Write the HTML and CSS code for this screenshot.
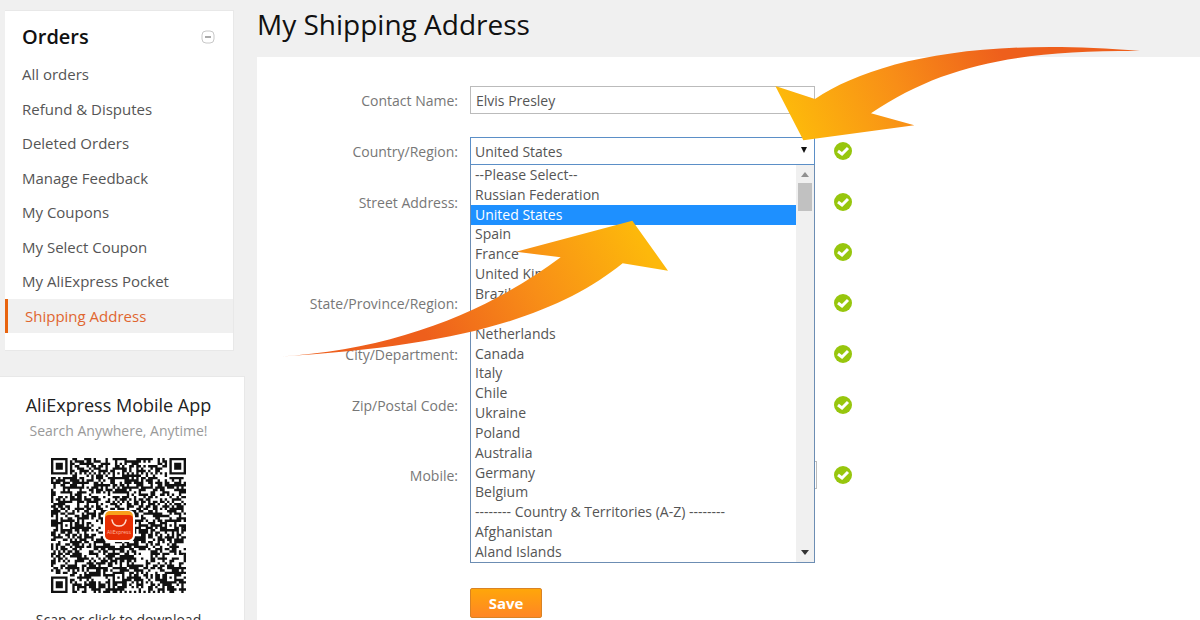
FILE: index.html
```html
<!DOCTYPE html>
<html lang="en">
<head>
    <meta charset="UTF-8">
    <meta name="viewport" content="width=device-width, initial-scale=1.0">
    <title>My Shipping Address</title>
    <link rel="stylesheet" href="styles.css">
</head>
<body>
    <div class="page">
        <aside class="sidebar">
            <nav class="orders">
                <div class="orders-head">
                    <h2>Orders</h2>
                    <button type="button" class="fold" aria-label="Collapse">
                        <svg width="14" height="14" viewBox="0 0 14 14">
                            <rect x="1" y="1" width="12" height="12" rx="4" fill="none" stroke="#c8c8c8"/>
                            <path d="M4 7h6" stroke="#aaa" stroke-width="2"/>
                        </svg>
                    </button>
                </div>
                <ul>
                    <li><a href="#">All orders</a></li>
                    <li><a href="#">Refund &amp; Disputes</a></li>
                    <li><a href="#">Deleted Orders</a></li>
                    <li><a href="#">Manage Feedback</a></li>
                    <li><a href="#">My Coupons</a></li>
                    <li><a href="#">My Select Coupon</a></li>
                    <li><a href="#">My AliExpress Pocket</a></li>
                    <li class="active"><a href="#">Shipping Address</a></li>
                </ul>
            </nav>
            <section class="app">
                <h3>AliExpress Mobile App</h3>
                <p class="slogan">Search Anywhere, Anytime!</p>
                <div class="qr">
                    <svg class="qr-code" viewBox="0 0 57 57">
                        <path id="qr-path" fill="#111"/>
                    </svg>
                    <svg class="qr-logo" viewBox="0 0 32 32">
                        <rect width="32" height="32" rx="6" fill="#fff"/>
                        <rect x="2" y="1" width="28" height="29" rx="5" fill="#f9a01b"/>
                        <path d="M2 9q0-4 4-4h20q4 0 4 4v16a5 5 0 0 1-5 5H7a5 5 0 0 1-5-5z" fill="#e62e04"/>
                        <path d="M9 10c1 8 13 8 14 0" fill="none" stroke="#ffd9c8" stroke-width="1.6" stroke-linecap="round"/>
                        <text x="16" y="24" text-anchor="middle" class="logo-text">AliExpress</text>
                    </svg>
                </div>
                <a class="download" href="#">Scan or click to download</a>
            </section>
        </aside>
        <main class="main">
            <h1>My Shipping Address</h1>
            <form class="panel">
                <div class="row">
                    <label for="name">Contact Name:</label>
                    <input type="text" id="name" value="Elvis Presley">
                </div>
                <div class="row">
                    <label for="country">Country/Region:</label>
                    <div class="select">
                        <select id="country">
                            <option>United States</option>
                        </select>
                        <svg class="caret" width="8" height="7" viewBox="0 0 8 7"><path d="M1 0h6L4 6z" fill="#111"/></svg>
                        <div class="dropdown">
                            <ul role="listbox" aria-label="Country/Region">
                                <li role="option">--Please Select--</li>
                                <li role="option">Russian Federation</li>
                                <li role="option" class="selected" aria-selected="true">United States</li>
                                <li role="option">Spain</li>
                                <li role="option">France</li>
                                <li role="option">United Kingdom</li>
                                <li role="option">Brazil</li>
                                <li role="option">Israel</li>
                                <li role="option">Netherlands</li>
                                <li role="option">Canada</li>
                                <li role="option">Italy</li>
                                <li role="option">Chile</li>
                                <li role="option">Ukraine</li>
                                <li role="option">Poland</li>
                                <li role="option">Australia</li>
                                <li role="option">Germany</li>
                                <li role="option">Belgium</li>
                                <li role="option">-------- Country &amp; Territories (A-Z) --------</li>
                                <li role="option">Afghanistan</li>
                                <li role="option">Aland Islands</li>
                            </ul>
                            <div class="scrollbar">
                                <svg width="8" height="5" viewBox="0 0 8 5"><path d="M4 0l4 5H0z" fill="#909090"/></svg>
                                <div class="thumb"></div>
                                <svg width="8" height="5" viewBox="0 0 8 5"><path d="M0 0h8L4 5z" fill="#333"/></svg>
                            </div>
                        </div>
                    </div>
                    <svg class="ok" viewBox="0 0 18 18"><circle cx="9" cy="9" r="9"/><path d="M4 9l4 3 6-6"/></svg>
                </div>
                <div class="row">
                    <label for="street">Street Address:</label>
                    <input type="text" id="street">
                    <svg class="ok" viewBox="0 0 18 18"><circle cx="9" cy="9" r="9"/><path d="M4 9l4 3 6-6"/></svg>
                </div>
                <div class="row second-line">
                    <label for="street2"></label>
                    <input type="text" id="street2">
                    <svg class="ok" viewBox="0 0 18 18"><circle cx="9" cy="9" r="9"/><path d="M4 9l4 3 6-6"/></svg>
                </div>
                <div class="row">
                    <label for="state">State/Province/Region:</label>
                    <input type="text" id="state">
                    <svg class="ok" viewBox="0 0 18 18"><circle cx="9" cy="9" r="9"/><path d="M4 9l4 3 6-6"/></svg>
                </div>
                <div class="row">
                    <label for="city">City/Department:</label>
                    <input type="text" id="city">
                    <svg class="ok" viewBox="0 0 18 18"><circle cx="9" cy="9" r="9"/><path d="M4 9l4 3 6-6"/></svg>
                </div>
                <div class="row">
                    <label for="zip">Zip/Postal Code:</label>
                    <input type="text" id="zip">
                    <svg class="ok" viewBox="0 0 18 18"><circle cx="9" cy="9" r="9"/><path d="M4 9l4 3 6-6"/></svg>
                </div>
                <div class="row mobile">
                    <label for="mobile">Mobile:</label>
                    <input type="text" id="mobile">
                    <svg class="ok" viewBox="0 0 18 18"><circle cx="9" cy="9" r="9"/><path d="M4 9l4 3 6-6"/></svg>
                </div>
                <button type="submit" class="save">Save</button>
            </form>
        </main>
        <svg class="arrow arrow-top" viewBox="0 0 1200 360">
            <defs>
                <linearGradient id="g1" gradientUnits="userSpaceOnUse" x1="120" y1="320" x2="720" y2="60">
                    <stop offset="0" stop-color="#fdb80b"/>
                    <stop offset="0.5" stop-color="#f88e17"/>
                    <stop offset="1" stop-color="#ee5f1c"/>
                </linearGradient>
            </defs>
            <path fill="url(#g1)" d="M46 168L165 207C330 97 640 20 1140 63C800 62 560 95 333 250L463 286L130 331Z"/>
        </svg>
        <svg class="arrow arrow-list" viewBox="0 0 1260 510">
            <defs>
                <linearGradient id="g2" gradientUnits="userSpaceOnUse" x1="1090" y1="80" x2="480" y2="430">
                    <stop offset="0" stop-color="#fdb80b"/>
                    <stop offset="0.5" stop-color="#f88e17"/>
                    <stop offset="1" stop-color="#ee5f1c"/>
                </linearGradient>
            </defs>
            <path fill="url(#g2)" d="M22 470C380 450 660 330 872 172L738 155L1087 62L1194 212L1058 190C860 350 560 440 22 470Z"/>
        </svg>
    </div>
    <script src="qr.js"></script>
</body>
</html>
```
FILE: styles.css
```css
*{
    box-sizing: border-box;
    padding: 0;
    margin: 0;
}
body{
    background-color: #f0f0f0;
    font-family: "Open Sans", "Noto Sans", sans-serif;
    font-size: 14px;
    color: #555;
}
ul{
    list-style: none;
}
a{
    color: inherit;
    text-decoration: none;
}
input, select, button{
    font: inherit;
    color: inherit;
}
.page{
    position: relative;
    display: flex;
    gap: 12px;
    height: 100vh;
    overflow: hidden;
}

/* sidebar */
.sidebar{
    flex: 0 0 245px;
}
.orders{
    margin: 10px 11px 25px 5px;
    padding-bottom: 17px;
    background-color: #fff;
    border: 1px solid #e8e8e8;
    border-left: none;
}
.orders-head{
    display: flex;
    justify-content: space-between;
    align-items: center;
    height: 46px;
    padding: 5px 18px 0 17px;
}
.orders-head h2{
    font-size: 20px;
    font-weight: 600;
    line-height: 28px;
    color: #111;
}
.fold{
    display: flex;
    border: none;
    background: none;
}
.orders ul{
    display: flex;
    flex-direction: column;
    height: 276px;
}
.orders li{
    flex: 1;
    display: flex;
    align-items: center;
    padding-left: 17px;
    font-size: 15px;
}
.orders li.active{
    border-left: 3px solid #e8640f;
    background-color: #f0f0f0;
    color: #e0662f;
}
.app{
    display: flex;
    flex-direction: column;
    align-items: center;
    padding: 15px 7px 20px 0;
    background-color: #fff;
    border-top: 1px solid #e8e8e8;
    border-right: 1px solid #e8e8e8;
}
.app h3{
    font-size: 18px;
    font-weight: 400;
    line-height: 26px;
    color: #222;
}
.slogan{
    margin-top: 3px;
    line-height: 20px;
    color: #999;
}
.qr{
    display: grid;
    place-items: center;
    margin: 17px 0;
}
.qr-code, .qr-logo{
    grid-area: 1 / 1;
}
.qr-code{
    width: 135px;
    height: 135px;
}
.qr-logo{
    width: 32px;
    height: 32px;
}
.logo-text{
    font-size: 5px;
    fill: #ffb9a0;
}
.download{
    line-height: 20px;
    color: #333;
}

/* address form */
.main{
    flex: 1;
    display: flex;
    flex-direction: column;
}
.main h1{
    height: 57px;
    font-size: 28px;
    font-weight: 400;
    line-height: 48px;
    color: #111;
}
.panel{
    flex: 1;
    display: flex;
    flex-direction: column;
    gap: 23px;
    padding-top: 29px;
    background-color: #fff;
}
.row{
    display: flex;
    align-items: center;
    height: 28px;
}
.row label{
    width: 201px;
    margin-right: 12px;
    text-align: right;
    color: #777;
}
.row input, .select{
    width: 345px;
    height: 28px;
}
.row input{
    padding: 0 5px;
    border: 1px solid #bbb;
    background-color: #fff;
}
.row.second-line{
    margin-top: -1px;
}
.row.mobile{
    margin-top: 19px;
}
.row.mobile input{
    width: 347px;
}
.row.mobile .ok{
    margin-left: 17px;
}
.select{
    position: relative;
}
.select select{
    width: 100%;
    height: 28px;
    padding: 0 4px;
    border: 1px solid #5b8fc7;
    border-radius: 0;
    background-color: #fff;
    appearance: none;
}
.caret{
    position: absolute;
    top: 10px;
    right: 7px;
}
.dropdown{
    position: absolute;
    top: 27px;
    left: 0;
    z-index: 1;
    display: flex;
    width: 100%;
    height: 399px;
    border: 1px solid #6c8db3;
    border-top-color: #5b8fc7;
    background-color: #fff;
}
.dropdown ul{
    flex: 1;
    display: flex;
    flex-direction: column;
}
.dropdown li{
    flex: 1;
    display: flex;
    align-items: center;
    padding-left: 4px;
    line-height: 18px;
}
.dropdown li.selected{
    background-color: #1e90ff;
    color: #fff;
}
.scrollbar{
    display: flex;
    flex-direction: column;
    align-items: center;
    width: 18px;
    padding: 7px 0;
    background-color: #f0f0f0;
}
.thumb{
    width: 14px;
    height: 28px;
    margin: 6px 0 auto;
    background-color: #c1c1c1;
}
.ok{
    width: 18px;
    height: 18px;
    margin-left: 19px;
}
.ok circle{
    fill: #97c60d;
}
.ok path{
    fill: none;
    stroke: #fff;
    stroke-width: 3;
}
.save{
    width: 72px;
    height: 30px;
    margin: 76px 0 0 213px;
    border: 1px solid #d98324;
    border-radius: 2px;
    background-image: linear-gradient(#ffa60a, #ff8624);
    font-size: 15px;
    font-weight: 700;
    color: #fff;
}

/* arrows drawn over the form */
.arrow{
    position: absolute;
    z-index: 2;
    pointer-events: none;
}
.arrow-top{
    top: 30px;
    left: 760px;
    width: 400px;
}
.arrow-list{
    top: 200px;
    left: 270px;
    width: 420px;
}
```
FILE: qr.js
```js
(function(){
    var size = 57;
    var seed = 20177;
    var grid = [];
    // fill the data area
    for(var y = 0;y < size;y++){
        grid[y] = [];
        for(var x = 0;x < size;x++){
            seed = (seed * 1103515245 + 12345) % 2147483648;
            grid[y][x] = seed / 2147483648 > 0.44;
        }
    }
    // concentric squares: the finder and alignment marks
    function mark(cx, cy, r, isDark){
        for(var y = cy - r;y <= cy + r;y++){
            for(var x = cx - r;x <= cx + r;x++){
                if(grid[y] && x >= 0 && x < size){
                    grid[y][x] = isDark(Math.max(Math.abs(x - cx), Math.abs(y - cy)));
                }
            }
        }
    }
    function finder(d){
        return d < 2 || d == 3;
    }
    function align(d){
        return d != 1;
    }
    for(var i = 8;i < size - 8;i++){
        grid[6][i] = grid[i][6] = i % 2 == 0;
    }
    mark(3, 3, 4, finder);
    mark(53, 3, 4, finder);
    mark(3, 53, 4, finder);
    [[28, 6], [6, 28], [50, 28], [28, 50], [50, 50]].forEach(function(p){
        mark(p[0], p[1], 2, align);
    });
    var d = "";
    grid.forEach(function(row, y){
        row.forEach(function(dark, x){
            if(dark){
                d += "M" + x + " " + y + "h1v1h-1z";
            }
        });
    });
    document.getElementById("qr-path").setAttribute("d", d);
})();
```
